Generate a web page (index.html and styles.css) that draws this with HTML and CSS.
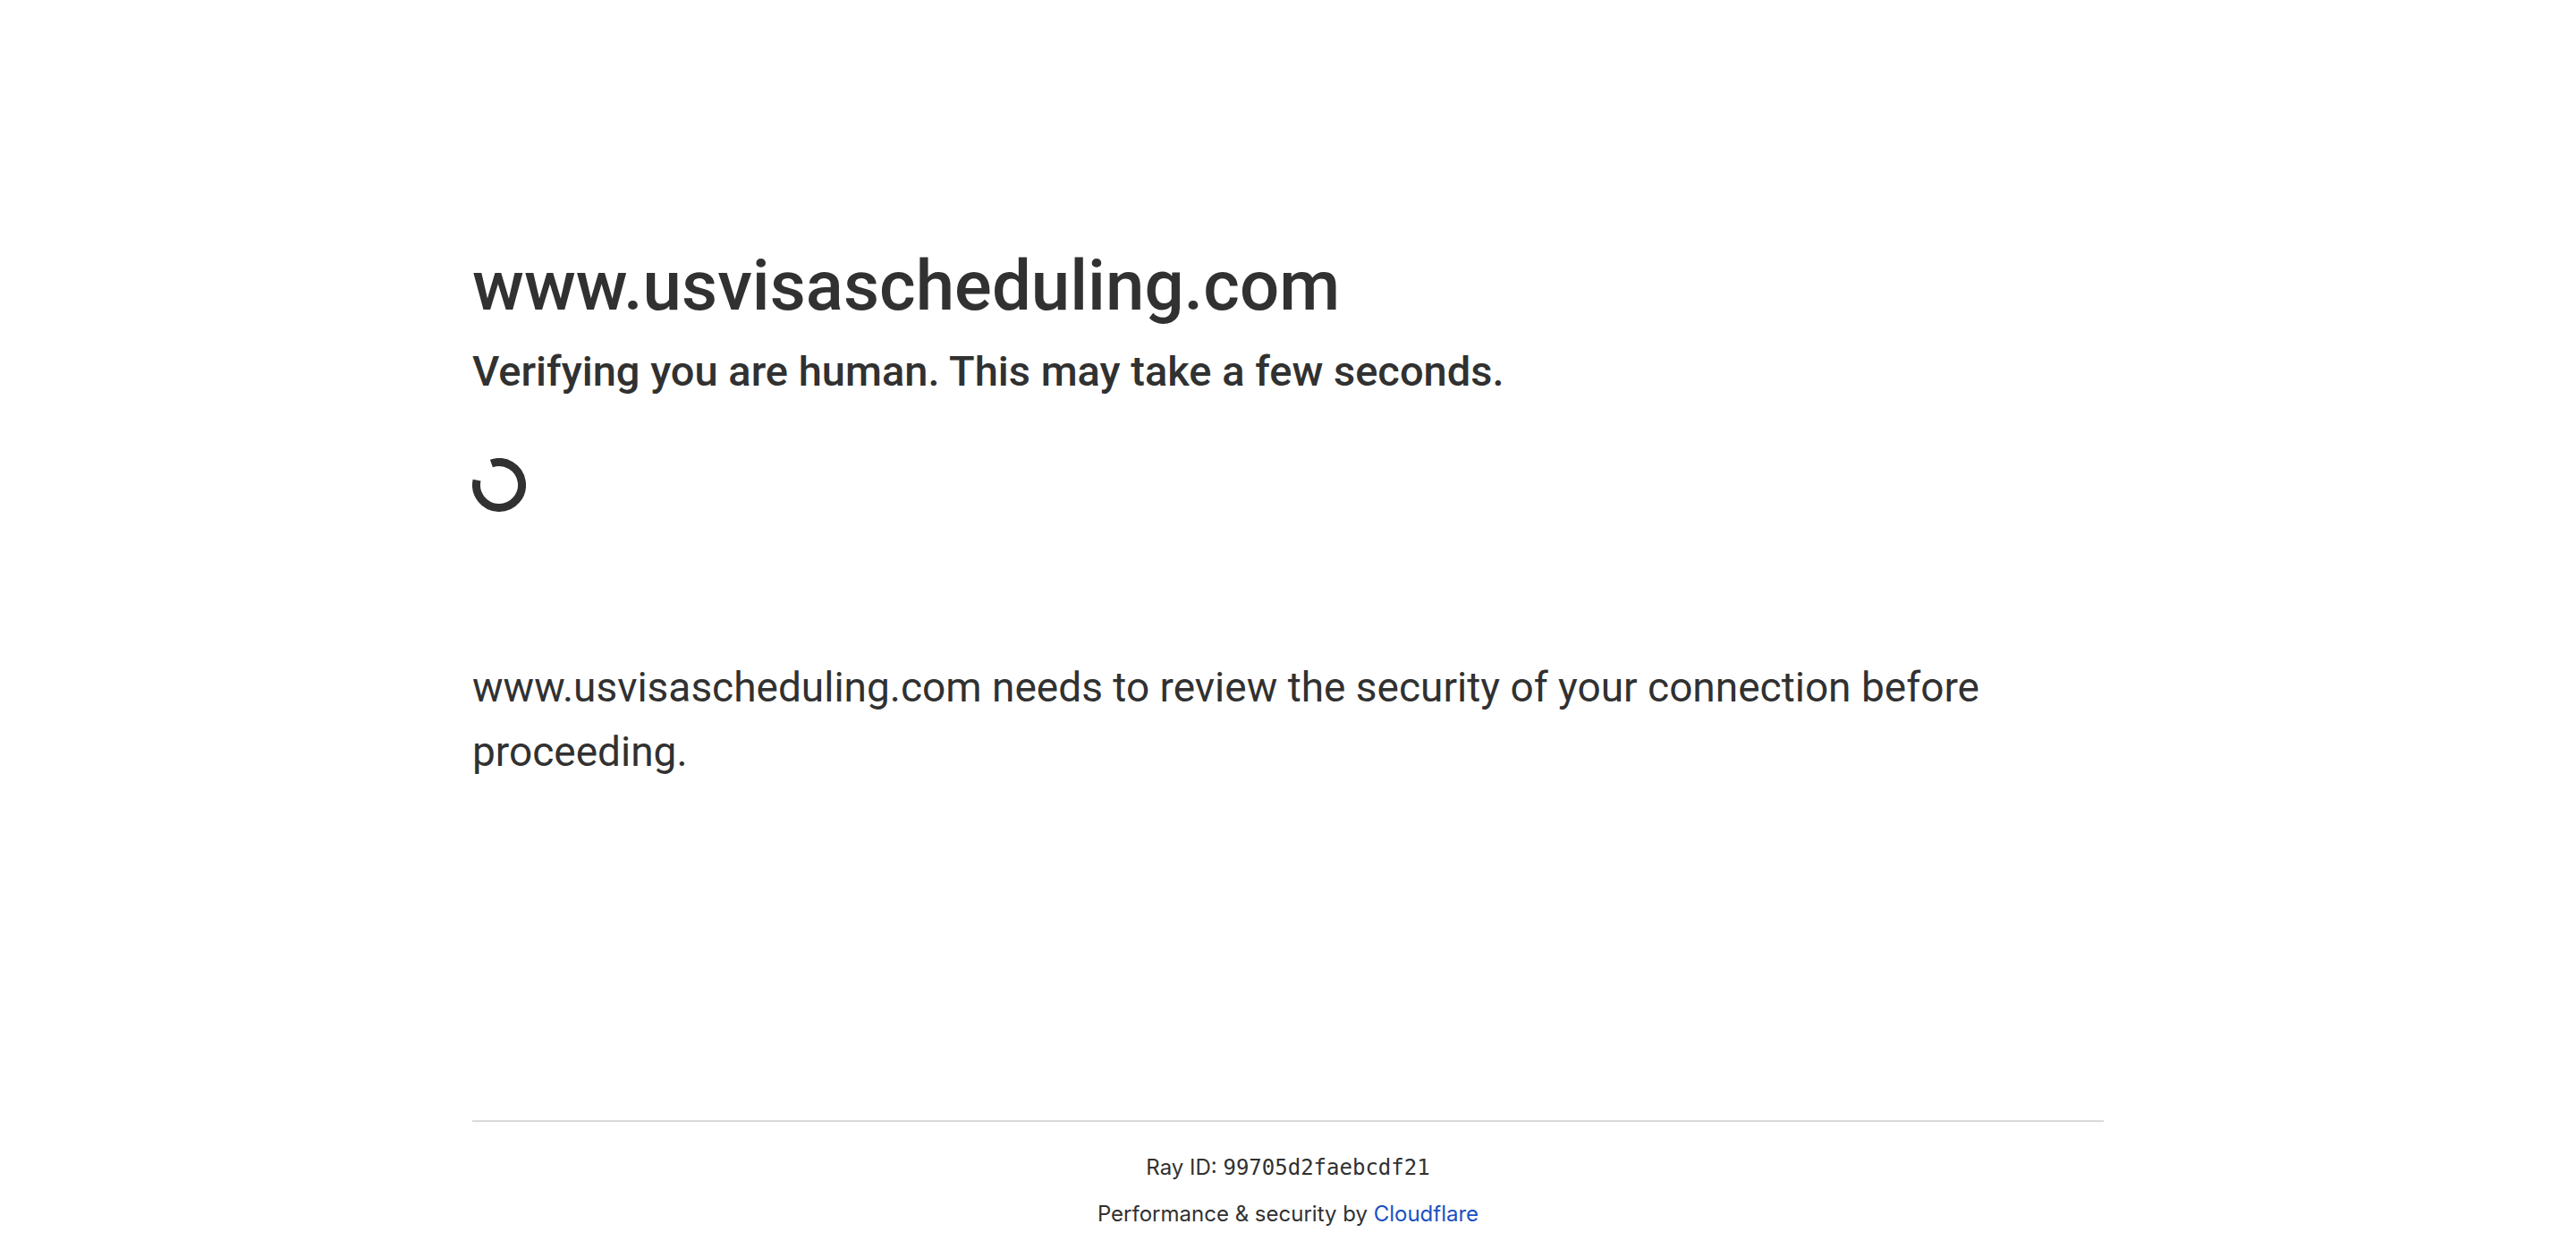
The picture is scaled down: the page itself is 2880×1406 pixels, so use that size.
FILE: index.html
```html
<!DOCTYPE html>
<html lang="en">
<head>
<meta charset="utf-8">
<title>Just a moment...</title>
<link rel="stylesheet" href="styles.css">
</head>
<body>
<main class="main">
<h1 class="title">www.usvisascheduling.com</h1>
<h2 class="subtitle">Verifying you are human. This may take a few seconds.</h2>
<svg class="spinner" viewBox="0 0 60 60" role="img" aria-label="Loading"><path d="M21.4 6A25.5 25.5 0 1 1 5.1 24.6" fill="none" stroke="currentColor" stroke-width="9"/></svg>
<p class="message">www.usvisascheduling.com needs to review the security of your connection before proceeding.</p>
</main>
<footer class="footer">
<div class="footer-inner">
<div>Ray ID: <code class="ray">99705d2faebcdf21</code></div>
<div>Performance &amp; security by <a class="link" href="https://www.cloudflare.com">Cloudflare</a></div>
</div>
</footer>
</body>
</html>
```
FILE: styles.css
```css
* { box-sizing: border-box; margin: 0; padding: 0; }
body {
  display: flex;
  flex-direction: column;
  min-height: 100vh;
  background: #fff;
  color: #313131;
  font-family: Roboto, "Liberation Sans", sans-serif;
}
.main, .footer { width: 100%; max-width: 1920px; margin: 0 auto; padding: 0 48px; }
.main { flex: 1; margin-top: 260px; }
.title { font-size: 78px; line-height: 120px; font-weight: 500; }
.subtitle { font-size: 47px; line-height: 70px; font-weight: 500; }
.spinner { display: block; width: 60px; height: 60px; margin: 62px 0 160px; }
.message { font-size: 46px; line-height: 72px; }
.footer { font-family: Inter, "Liberation Sans", sans-serif; font-size: 24px; line-height: 36px; text-align: center; }
.footer-inner { display: flex; flex-direction: column; gap: 16px; padding: 33px 0 31px; border-top: 2px solid #d9d9d9; }
.ray { font-family: "DejaVu Sans Mono", monospace; font-size: 24px; }
.link { color: #1a50c0; text-decoration: none; }
```
